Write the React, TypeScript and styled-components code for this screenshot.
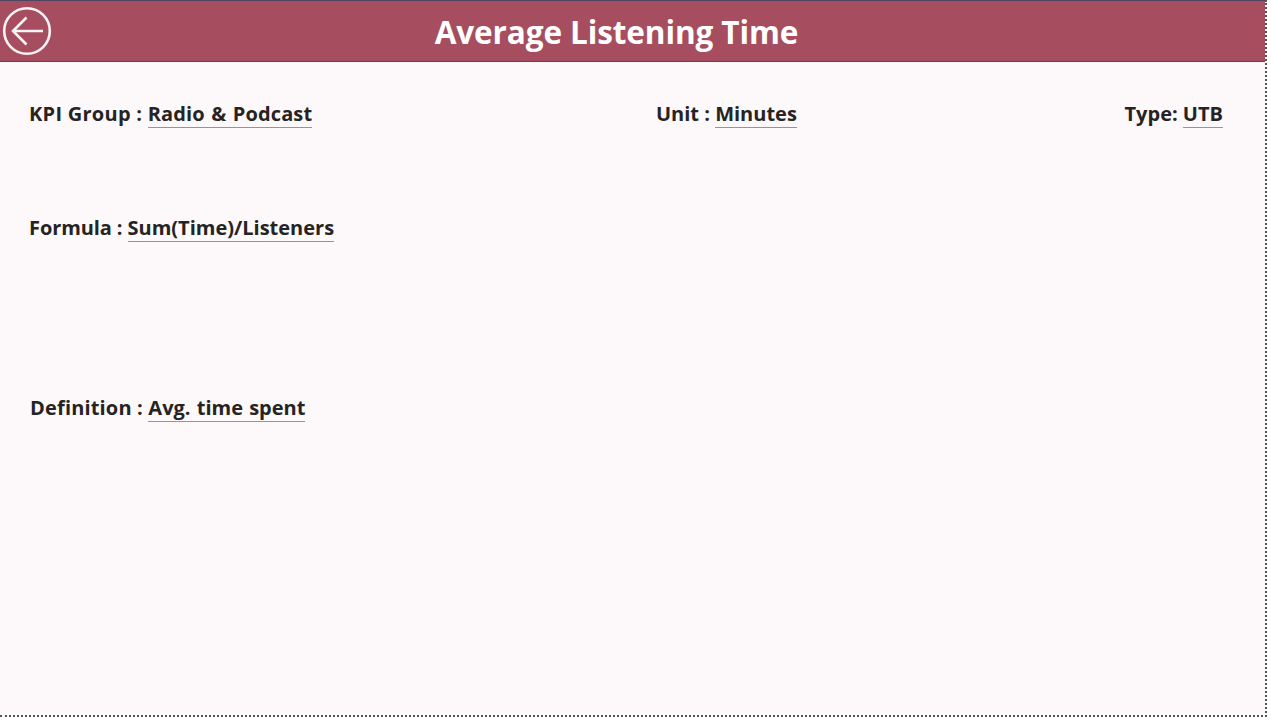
import styled, { createGlobalStyle } from "styled-components";

const GlobalStyle = createGlobalStyle`
  html, body {
    margin: 0;
    height: 100%;
    background: #ffffff;
  }
`;

const Page = styled.div`
  box-sizing: border-box;
  width: 1267px;
  height: 717px;
  background: #fdf8fa;
  border-right: 2px dotted #555;
  border-bottom: 2px dotted #555;
  font-family: "Open Sans", "Noto Sans", sans-serif;
  color: #252423;
`;

const Header = styled.header`
  box-sizing: border-box;
  height: 62px;
  border-top: 1px solid #4f4564;
  border-bottom: 1px solid #5d4664;
  background: #a64e5f;
  display: grid;
  grid-template-columns: 52px 1fr 84px;
  align-items: center;
`;

const BackButton = styled.button`
  width: 50px;
  height: 50px;
  margin-left: 2px;
  padding: 0;
  border: none;
  background: none;
  display: flex;
`;

const Title = styled.h1`
  margin: 0;
  color: #ffffff;
  font-size: 31.5px;
  font-weight: 700;
  text-align: center;
  letter-spacing: -0.1px;
`;

const Content = styled.main`
  padding: 37px 42px 0 29px;
  display: flex;
  flex-direction: column;
`;

const TopRow = styled.div`
  display: grid;
  grid-template-columns: 627px 1fr auto;
  height: 114px;
`;

const Field = styled.div<{ $indent?: number; $height?: number }>`
  height: ${(p) => (p.$height ? `${p.$height}px` : "auto")};
  margin-left: ${(p) => p.$indent ?? 0}px;
  font-size: 20px;
  font-weight: 700;
  line-height: 29px;
  white-space: pre;
`;

const Label = styled.span<{ $tracking?: number }>`
  letter-spacing: ${(p) => p.$tracking ?? 0}px;
`;

const Value = styled.span<{ $tracking?: number }>`
  display: inline-block;
  height: 27px;
  line-height: 28px;
  letter-spacing: ${(p) => p.$tracking ?? 0}px;
  word-spacing: 1px;
  border-bottom: 1px solid #8492d0;
`;

export default function App() {
  return (
    <>
      <GlobalStyle />
      <Page>
        <Header>
          <BackButton aria-label="Back">
            <svg width="50" height="50" viewBox="0 0 50 50" fill="none" stroke="#fdf3f5" strokeWidth="2.6">
              <circle cx="25" cy="25" r="22.8" />
              <path d="M41 25H11M24.5 11.5L11 25l13.5 13.5" />
            </svg>
          </BackButton>
          <Title>Average Listening Time</Title>
        </Header>
        <Content>
          <TopRow>
            <Field>
              <Label $tracking={0.27}>KPI Group : </Label>
              <Value $tracking={0.14}>Radio &amp; Podcast</Value>
            </Field>
            <Field>
              <Label>Unit : </Label>
              <Value>Minutes</Value>
            </Field>
            <Field>
              <Label>Type: </Label>
              <Value>UTB</Value>
            </Field>
          </TopRow>
          <Field $height={180}>
            <Label $tracking={-0.1}>Formula : </Label>
            <Value>Sum(Time)/Listeners</Value>
          </Field>
          <Field $indent={1}>
            <Label $tracking={0.17}>Definition : </Label>
            <Value>Avg. time spent</Value>
          </Field>
        </Content>
      </Page>
    </>
  );
}
